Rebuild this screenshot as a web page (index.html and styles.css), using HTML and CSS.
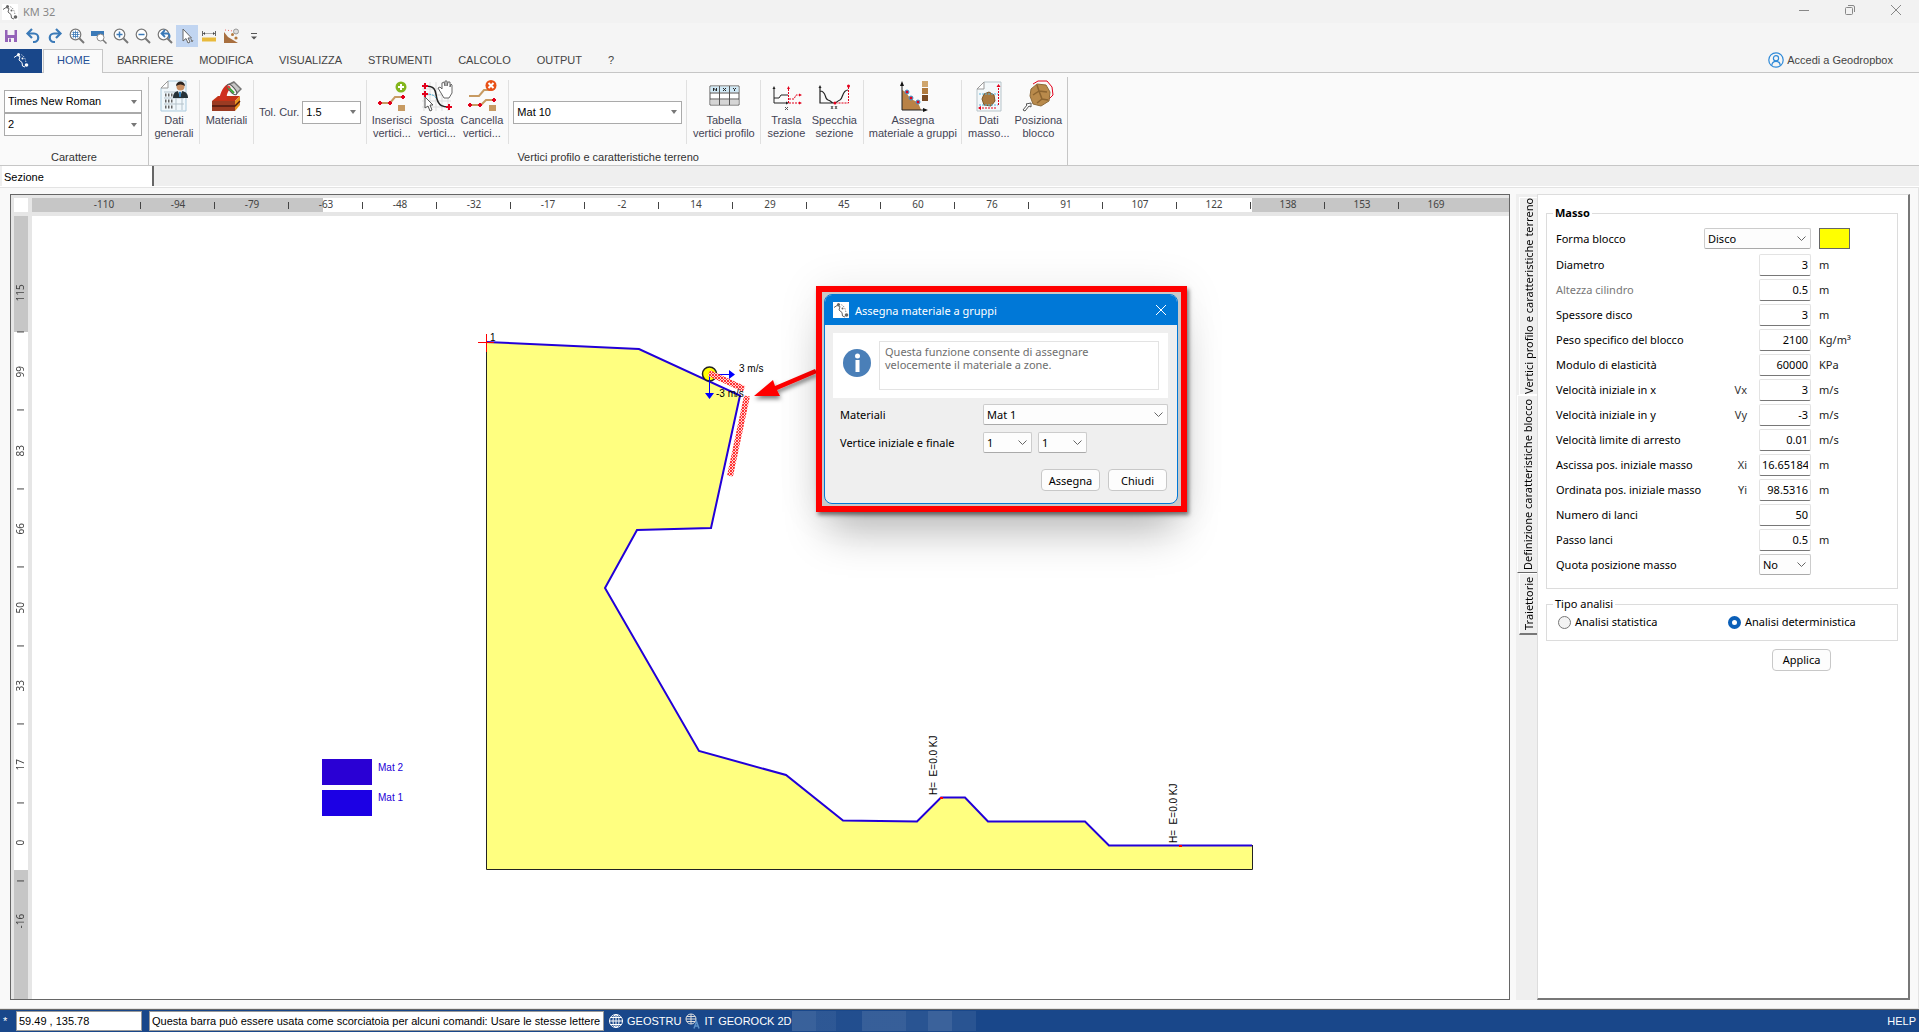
FILE: index.html
```html
<!DOCTYPE html>
<html lang="it">
<head>
<meta charset="utf-8">
<title>KM 32</title>
<link rel="stylesheet" href="styles.css">
</head>
<body>
<svg class="defs" aria-hidden="true">
  <defs>
    <symbol id="logo" viewBox="0 0 16 16">
      <path d="M1 5.500 4 3.500 7 4.500 6 8 9 10.500 9.500 14 12 15" fill="none" stroke="currentColor"/>
      <path d="M6 2.500C10 2 12.500 6 13 11" fill="none" stroke="currentColor" stroke-dasharray="1 1.500"/>
      <circle cx="5.500" cy="2.500" r="1.500" fill="currentColor"/>
      <circle cx="9.500" cy="6.500" r="1" fill="currentColor"/>
      <circle cx="13.500" cy="13" r="1.800" fill="currentColor"/>
    </symbol>
    <symbol id="lens" viewBox="0 0 16 16">
      <circle cx="6.500" cy="6.500" r="5.300" fill="#fff" stroke="#777" stroke-width="1.200"/>
      <path d="M10.500 10.500 15 15" stroke="#777" stroke-width="2"/>
    </symbol>
  </defs>
</svg>

<header class="titlebar">
  <svg class="titlebar-logo" viewBox="0 0 16 16"><use href="#logo"/></svg>
  <span class="titlebar-name">KM 32</span>
  <button class="window-button" aria-label="Riduci a icona"><svg viewBox="0 0 12 12"><path d="M1 6.500h10"/></svg></button>
  <button class="window-button" aria-label="Ripristina"><svg viewBox="0 0 12 12"><rect x="1.500" y="3.500" width="7" height="7" rx="1"/><path d="M4 1.500h5a1.500 1.500 0 0 1 1.500 1.500v5"/></svg></button>
  <button class="window-button" aria-label="Chiudi finestra"><svg viewBox="0 0 12 12"><path d="M1 1l10 10M11 1 1 11"/></svg></button>
</header>

<div class="quickbar" role="toolbar">
  <button class="quick" aria-label="Salva"><svg viewBox="0 0 16 16"><path d="M2 2h12v12H2z" fill="#9463b8"/><path d="M4.500 2h7v5h-7zM5 10h6v4H5z" fill="#f5f5f5"/><path d="M6 10.500h2V14H6z" fill="#9463b8"/></svg></button>
  <button class="quick" aria-label="Annulla"><svg viewBox="0 0 16 16"><path d="M3 5.500h6a4 4 0 0 1 0 8.500H8" fill="none" stroke="#3b7ab8" stroke-width="2.200"/><path d="M7 1 2.500 5.500 7 10" fill="none" stroke="#3b7ab8" stroke-width="2.200"/></svg></button>
  <button class="quick" aria-label="Ripeti"><svg viewBox="0 0 16 16"><path d="M13 5.500H7A4 4 0 0 0 7 14h1" fill="none" stroke="#3b7ab8" stroke-width="2.200"/><path d="M9 1l4.500 4.500L9 10" fill="none" stroke="#3b7ab8" stroke-width="2.200"/></svg></button>
  <button class="quick" aria-label="Zoom tutto"><svg viewBox="0 0 16 16"><use href="#lens"/><path d="M6.500 2.500v8M2.500 6.500h8M4.500 3.500v6M8.500 3.500v6" stroke="#3b7ab8" stroke-width=".8"/><path d="M3.500 4.500h6M3.500 8.500h6" stroke="#3b7ab8" stroke-width=".8"/></svg></button>
  <button class="quick" aria-label="Zoom finestra"><svg viewBox="0 0 16 16"><path d="M0 3h13v5H0z" fill="#3b7ab8"/><circle cx="9.500" cy="9.500" r="3.500" fill="#fff" stroke="#888"/><path d="m12 12 3.500 3.500" stroke="#777" stroke-width="1.500"/></svg></button>
  <button class="quick" aria-label="Zoom avanti"><svg viewBox="0 0 16 16"><use href="#lens"/><path d="M6.500 3.500v6M3.500 6.500h6" stroke="#3b7ab8" stroke-width="1.500"/></svg></button>
  <button class="quick" aria-label="Zoom indietro"><svg viewBox="0 0 16 16"><use href="#lens"/><path d="M3.500 6.500h6" stroke="#3b7ab8" stroke-width="1.500"/></svg></button>
  <button class="quick" aria-label="Zoom precedente"><svg viewBox="0 0 16 16"><use href="#lens"/><path d="M5 5.500h5c3 0 3 3 2 5M8 2 4.500 5.500 8 9" fill="none" stroke="#3b7ab8" stroke-width="1.800"/></svg></button>
  <button class="quick quick-on" aria-label="Seleziona"><svg viewBox="0 0 16 16"><path d="M4 1v12l3-2.500L9 15l2-1-2-4h3.500z" fill="#fff" stroke="#666"/><path d="M12 11l1 3 1-2" stroke="#777" fill="none"/></svg></button>
  <button class="quick" aria-label="Misura"><svg viewBox="0 0 16 16"><path d="M1 9.500h14v4H1z" fill="#e9ba3c"/><path d="M1.500 3v5M14.500 3v5" stroke="#666"/><path d="M2 5.500h12" stroke="#aaa"/><path d="m2 5.500 2-1.500v3zM14 5.500 12 4v3z" fill="#444"/></svg></button>
  <button class="quick" aria-label="Lancia masso"><svg viewBox="0 0 16 16"><path d="M1 4l4 5 5 3 5 3H1z" fill="#a86f3f"/><circle cx="13" cy="3.500" r="2.500" fill="#ddd" stroke="#999"/><circle cx="9.500" cy="6.500" r="1.500" fill="#b3793f"/><circle cx="13" cy="10" r="1.600" fill="#b3793f"/><path d="M2 2l8 1" stroke="#e66" stroke-dasharray="1 2"/></svg></button>
  <button class="quick quick-more" aria-label="Altri comandi"><svg viewBox="0 0 16 16"><path d="M5 5.500h6" stroke="#555"/><path d="M5 8.500h6l-3 3z" fill="#555"/></svg></button>
</div>

<nav class="tabs">
  <button class="file-tab" aria-label="File"><svg viewBox="0 0 16 16"><use href="#logo"/></svg></button>
  <a class="tab tab-on" href="#">HOME</a>
  <a class="tab" href="#">BARRIERE</a>
  <a class="tab" href="#">MODIFICA</a>
  <a class="tab" href="#">VISUALIZZA</a>
  <a class="tab" href="#">STRUMENTI</a>
  <a class="tab" href="#">CALCOLO</a>
  <a class="tab" href="#">OUTPUT</a>
  <a class="tab" href="#">?</a>
  <a class="account" href="#"><svg viewBox="0 0 16 16"><circle cx="8" cy="8" r="7.200"/><circle cx="8" cy="6.300" r="2.600"/><path d="M3.800 13.500C4 8 12 8 12.200 13.500"/></svg>Accedi a Geodropbox</a>
</nav>

<section class="ribbon">
  <div class="group">
    <div class="font-box">
      <select class="combo" aria-label="Carattere"><option>Times New Roman</option></select>
      <select class="combo" aria-label="Dimensione"><option>2</option></select>
    </div>
    <div class="group-name">Carattere</div>
  </div>
  <div class="group">
    <div class="tools">
      <div class="cell"><button class="tool"><svg viewBox="0 0 32 32">
        <path d="M10 1h18v30H3V8z" fill="#f1f8fc" stroke="#a9c9dc"/><path d="M10 1v7H3z" fill="#fff" stroke="#999"/>
        <path d="M6 12h20M6 18h20M6 24h20M18 12v18M24 18v12" stroke="#b5c3cb"/>
        <path d="M7 15h9M7 21h9M7 27h9" stroke="#666" stroke-width="3" stroke-dasharray="1.500 1.500"/>
        <path d="M15 18c0-6 3-7 7-7s8 1 8 7z" fill="#263238"/><path d="m20 11 2 6 2-6z" fill="#fff"/><path d="m21.500 12 .5 5 .5-5z" stroke="#2b7fc0"/><circle cx="22.500" cy="6.500" r="4" fill="#c98f63"/><path d="M18 6c0-6 9-6 9 0-3-2-6-2-9 0z" fill="#2b2320"/></svg>Dati<br>generali</button></div>
      <div class="cell"><button class="tool tool-mid"><svg viewBox="0 0 32 32">
        <path d="M1 21l6-5h22l-5 5z" fill="#c33318"/><path d="M1 21h23v10H1z" fill="#9b3b22"/><path d="m24 21 5-5v9l-5 6z" fill="#e8921f"/><path d="M1 26h23l5-5" stroke="#4b1a10" fill="none" stroke-width="1.500"/>
        <path d="M8 20c1-5 3-13 9-16l4 1-2 4c-3 3-4 7-3 11z" fill="#cf2f20"/>
        <path d="m17 4 6-3 8 8-6 6z" fill="#777"/><path d="m19 5 4-2 6 6-4 4z" fill="#c7c7c7"/><ellipse cx="21" cy="9.500" rx="2.500" ry="6.500" transform="rotate(-42 21 9.500)" fill="#f3f3f3" stroke="#555"/><path d="m17 7 6 6" stroke="#39a839" stroke-width="2"/><path d="m17 6 2 2" stroke="#e33" stroke-width="2"/></svg>Materiali</button></div>
      <div class="cell field-cell"><label for="tol">Tol. Cur.</label><select class="combo combo-small" id="tol"><option>1.5</option></select></div>
      <div class="cell vertex-cell">
        <button class="tool tool-vertex"><svg viewBox="0 0 32 32"><path d="M4 23h10l5-6h8" fill="none" stroke="#c79a62" stroke-width="2"/><path d="M4 21v4M2 23h4M14 21v4M12 23h4M27 15v4M25 17h4" stroke="#e3001b" stroke-width="2"/><circle cx="25" cy="7" r="5.500" fill="#83b61d"/><path d="M25 4v6M22 7h6" stroke="#fff" stroke-width="2"/><path d="M22 25h7v6h-7z" fill="#c79a62"/></svg>Inserisci<br>vertici...</button>
        <button class="tool tool-vertex"><svg viewBox="0 0 32 32"><path d="M3 4v27M9 2v29M15 2v29M21 2v29M27 2v29M1 9h29M1 15h29M1 21h29M1 27h29" stroke="#ddd"/><path d="M4 6c12 0 10 6 12 13s6 8 12 8" fill="none" stroke="#222" stroke-width="1.500"/><path d="M3 14c8 0 10 1 12 4" fill="none" stroke="#4bb0d8" stroke-dasharray="3 1"/><path d="M4 3v6M1 6h6M4 11v6M1 14h6M28 24v6M25 27h6" stroke="#e3001b" stroke-width="2"/><path d="M4 17v11l3-2 2 5 2-1-2-5h3z" fill="#fff" stroke="#555"/><path d="m17 8 2-1 2 2V3l2-1 1 4V1h2v5l1-4h2v5l1-3 1 1v8l-3 5h-5z" fill="#fff" stroke="#666"/></svg>Sposta<br>vertici...</button>
        <button class="tool tool-vertex"><svg viewBox="0 0 32 32"><path d="M3 16h10l5-6h6M4 25h11l5-5h9" fill="none" stroke="#c79a62" stroke-width="2"/><path d="M4 23v4M2 25h4M14 23v4M12 25h4M28 18v4M26 20h4" stroke="#e3001b" stroke-width="2"/><circle cx="25" cy="5.500" r="5.500" fill="#e85015"/><path d="m22.500 3 5 5m0-5-5 5" stroke="#fff" stroke-width="2"/><path d="M23 25h7v6h-7z" fill="#c79a62"/></svg>Cancella<br>vertici...</button>
      </div>
      <div class="cell mat-cell"><select class="combo combo-mat" aria-label="Materiale corrente"><option>Mat 10</option></select></div>
      <div class="cell"><button class="tool tool-table"><svg viewBox="0 0 32 32"><path d="M2 6h29v19H2z" fill="#fff" stroke="#555"/><path d="M2.500 6.500h28v6h-28z" fill="#cfe8f5"/><path d="M2.500 19.500h28v5h-28z" fill="#d5d5d5"/><path d="M2 13h29M2 19h29M11.500 6v19M21.500 6v19" stroke="#555"/><path d="M5.500 11V8l3 3V8M15 8l3 3m0-3-3 3M25 8l1.500 1.500L28 8m-1.500 1.500V11" fill="none" stroke="#222"/></svg>Tabella<br>vertici profilo</button></div>
      <div class="cell pair-cell">
        <button class="tool"><svg viewBox="0 0 32 32"><path d="M4 8v15h13" fill="none" stroke="#222"/><path d="M2.500 9 4 6l1.500 3zM16 21.500l3 1.500-3 1.500z" fill="#222"/><path d="M4 18h5l2-3h7" fill="none" stroke="#222"/><path d="M18.500 23V8M19 23h11M19 19h5l2-4h4" fill="none" stroke="#e3001b" stroke-dasharray="2 1"/><path d="m17 9 1.500-3L20 9zM29 21.500l3 1.500-3 1.500zM29 13.500l3 1.500-3 1.500z" fill="#e3001b"/><path d="m15 27 3 3m0-3-3 3" stroke="#555"/></svg>Trasla<br>sezione</button>
        <button class="tool tool-end"><svg viewBox="0 0 32 32"><path d="M2 7v16h14M2 11c7 0 4 8 8 9s3 3 6 3 3-2 6-3 2-10 8-10" fill="none" stroke="#222" stroke-width="1.200"/><path d="M30.500 7v16H19" fill="none" stroke="#e3001b" stroke-dasharray="2 1"/><path d="m.5 8 1.500-3 1.500 3z" fill="#222"/><circle cx="30.500" cy="6" r="1.500" fill="#e3001b"/><circle cx="17" cy="23" r="1.500" fill="#e3001b"/><path d="m13 26 2 3m0-3-2 3m4-3 2 3m0-3-2 3" stroke="#555"/></svg>Specchia<br>sezione</button>
      </div>
      <div class="cell"><button class="tool tool-wide"><svg viewBox="0 0 32 32"><path d="M5 10c6 2 6 8 11 10s6 4 8 10H5z" fill="#b98246"/><path d="M5 4v26h23" fill="none" stroke="#222"/><path d="M3 6 5 1l2 5zM26 28l5 2-5 2z" fill="#111"/><g fill="#e3001b" stroke="#3aa0d8"><circle cx="10" cy="12" r="2"/><circle cx="14" cy="18" r="2"/><circle cx="21" cy="22" r="2"/></g><path d="M25 1h6v6h-6z" fill="#cfa56c"/><path d="M25 8h6v6h-6z" fill="#b07a3e"/><path d="M25 15h6v6h-6z" fill="#7a4a22"/></svg>Assegna<br>materiale a gruppi</button></div>
      <div class="cell pair-cell">
        <button class="tool tool-mid"><svg viewBox="0 0 32 32"><path d="M11 2h17v29H4V9z" fill="#f3f8fa" stroke="#b7c4ca"/><path d="M11 2v7H4z" fill="#fff" stroke="#999"/><path d="m11 14 5-2 5 3 1 6-4 5-7-1-2-6z" fill="#a9793f" stroke="#7a5527"/><path d="M6 14h19M6 25h19" stroke="#5ab4dc" stroke-dasharray="2 1"/><path d="M25.500 5v20M6 28h17" stroke="#e3001b" stroke-dasharray="2 1"/><path d="m23.500 7 2-3 2 3zM8 26l-3 2 3 2z" fill="#e3001b"/></svg>Dati<br>masso...</button>
        <button class="tool tool-end"><svg viewBox="0 0 32 32"><path d="M11 4l5-3h9l5 6 1 8-5 5" fill="none" stroke="#e3001b"/><path d="m9 9 6-5 9 1 4 7-1 9-8 5-8-2-3-8z" fill="#b98a4b" stroke="#8c6a3a"/><path d="m15 5 2 6 8 1m-8-1-6 4m6-4 3 8 6 1m-6-1-5 4" fill="none" stroke="#8c6430" stroke-width="1.500"/><path d="m9 23-5 1 1 1-4 5 2 1 4-5 2 1z" fill="#fff" stroke="#555"/></svg>Posiziona<br>blocco</button>
      </div>
    </div>
    <div class="group-name">Vertici profilo e caratteristiche terreno</div>
  </div>
</section>

<div class="doc-tabs"><button class="doc-tab">Sezione</button></div>

<main class="workspace">
  <section class="view">
    <div class="corner"></div>
    <div class="ruler ruler-h">
      <span>-110</span><span>-94</span><span>-79</span><span>-63</span><span>-48</span><span>-32</span><span>-17</span><span>-2</span><span>14</span><span>29</span><span>45</span><span>60</span><span>76</span><span>91</span><span>107</span><span>122</span><span>138</span><span>153</span><span>169</span>
    </div>
    <div class="ruler ruler-v">
      <span>115</span><span>99</span><span>83</span><span>66</span><span>50</span><span>33</span><span>17</span><span>0</span><span>-16</span>
    </div>
    <div class="canvas">
      <svg class="drawing" role="img" aria-label="Profilo del pendio">
        <defs>
          <pattern id="hatch" width="3" height="3" patternUnits="userSpaceOnUse"><rect width="3" height="3" fill="#ffd0d0"/><path d="M0 0l3 3M3 0 0 3" stroke="#f22" stroke-width=".9"/></pattern>
          <filter id="soft" x="-30%" y="-30%" width="160%" height="170%"><feDropShadow dx="1" dy="3" stdDeviation="2" flood-opacity=".5"/></filter>
        </defs>
        <path d="M454 126 607 133 708 179.500 679 312 605 314 573 372 667 535 754 559 811 604.500 885 605.500 909 581.500H933L956 605.500H1053L1077 629.500H1220V653.500H454z" fill="#ffff80"/>
        <path d="M454.500 126V653.500H1220.500V629" fill="none" stroke="#222"/>
        <path d="M454 126 607 133 708 179.500 679 312 605 314 573 372 667 535 754 559 811 604.500 885 605.500 909 581.500H933L956 605.500H1053L1077 629.500H1220" fill="none" stroke="#2200d8" stroke-width="2"/>
        <path d="M446 126.500h16M454.500 118v18" stroke="#f00"/>
        <text x="458" y="125">1</text>
        <circle cx="677.500" cy="158" r="7" fill="#ff0" stroke="#222" stroke-width="1.500"/>
        <path d="M678 158.500h20M677.500 159v20" stroke="#00f"/>
        <path d="m697 154 6 4.500-6 4.500zM673 177h9l-4.500 6z" fill="#00f"/>
        <path d="m677 157 35 16M715 180l-17 80" stroke="url(#hatch)" stroke-width="6"/>
        <text x="707" y="156">3 m/s</text><text x="684" y="181">-3 m/s</text>
        <path d="m722 180 19-16 2 6 40-17 2 4-40 17 3 6z" fill="#f00" filter="url(#soft)"/>
        <path d="M290 543h50v26h-50z" fill="#2a00d4"/><path d="M290 574h50v26h-50z" fill="#1c00e4"/>
        <text class="legend" x="346" y="555">Mat 2</text><text class="legend" x="346" y="585">Mat 1</text>
        <text transform="translate(905 579) rotate(-90)">H=&#160; E=0.0 KJ</text>
        <text transform="translate(1145 627) rotate(-90)">H=&#160; E=0.0 KJ</text>
        <path d="M908 581h3v2h-3zM1147 629h3v2h-3z" fill="#f00"/>
      </svg>
      <div class="callout">
        <form class="dialog" aria-label="Assegna materiale a gruppi">
          <header class="dialog-title"><svg viewBox="0 0 16 16"><use href="#logo"/></svg><span>Assegna materiale a gruppi</span>
            <button type="button" class="dialog-close" aria-label="Chiudi"><svg viewBox="0 0 12 12"><path d="M1 1l10 10M11 1 1 11"/></svg></button></header>
          <div class="dialog-info">
            <svg viewBox="0 0 28 28"><circle cx="14" cy="14" r="14" fill="#4a7fb8"/><circle cx="14.500" cy="7" r="2.500" fill="#fff"/><path d="M12.500 11h4v12h-4z" fill="#fff"/></svg>
            <p>Questa funzione consente di assegnare velocemente il materiale a zone.</p>
          </div>
          <div class="dialog-row"><label for="mat">Materiali</label><select class="drop drop-mat" id="mat"><option>Mat 1</option></select></div>
          <div class="dialog-row"><label for="v1">Vertice iniziale e finale</label><select class="drop drop-vertex" id="v1"><option>1</option></select><select class="drop drop-vertex" aria-label="Vertice finale"><option>1</option></select></div>
          <div class="dialog-actions"><button type="button" class="push">Assegna</button><button type="button" class="push">Chiudi</button></div>
        </form>
      </div>
    </div>
  </section>

  <aside class="side">
    <div class="side-tabs">
      <button class="side-tab side-tab-1">Vertici profilo e caratteristiche terreno</button>
      <button class="side-tab side-tab-2">Definizione caratteristiche blocco</button>
      <button class="side-tab side-tab-3">Traiettorie</button>
    </div>
    <form class="side-page">
      <fieldset class="box box-mass">
        <legend class="bold">Masso</legend>
        <div class="row row-first"><label for="f0">Forma blocco</label><select class="drop drop-shape" id="f0"><option>Disco</option></select><span><button type="button" class="swatch" aria-label="Colore blocco"></button></span></div>
        <div class="row"><label for="f1">Diametro</label><input id="f1" value="3"><span>m</span></div>
        <div class="row"><label class="dim" for="f2">Altezza cilindro</label><input id="f2" value="0.5"><span>m</span></div>
        <div class="row"><label for="f3">Spessore disco</label><input id="f3" value="3"><span>m</span></div>
        <div class="row"><label for="f4">Peso specifico del blocco</label><input id="f4" value="2100"><span>Kg/m³</span></div>
        <div class="row"><label for="f5">Modulo di elasticità</label><input id="f5" value="60000"><span>KPa</span></div>
        <div class="row"><label for="f6">Velocità iniziale in x</label><i>Vx</i><input id="f6" value="3"><span>m/s</span></div>
        <div class="row"><label for="f7">Velocità iniziale in y</label><i>Vy</i><input id="f7" value="-3"><span>m/s</span></div>
        <div class="row"><label for="f8">Velocità limite di arresto</label><input id="f8" value="0.01"><span>m/s</span></div>
        <div class="row"><label for="f9">Ascissa pos. iniziale masso</label><i>Xi</i><input id="f9" value="16.65184"><span>m</span></div>
        <div class="row"><label for="f10">Ordinata pos. iniziale masso</label><i>Yi</i><input id="f10" value="98.5316"><span>m</span></div>
        <div class="row"><label for="f11">Numero di lanci</label><input id="f11" value="50"><span></span></div>
        <div class="row"><label for="f12">Passo lanci</label><input id="f12" value="0.5"><span>m</span></div>
        <div class="row"><label for="f13">Quota posizione masso</label><select class="drop drop-yes" id="f13"><option>No</option></select><span></span></div>
      </fieldset>
      <fieldset class="box box-type">
        <legend>Tipo analisi</legend>
        <div class="choices">
          <label><input type="radio" name="type">Analisi statistica</label>
          <label><input type="radio" name="type" checked>Analisi deterministica</label>
        </div>
      </fieldset>
      <button type="button" class="push push-apply">Applica</button>
    </form>
  </aside>
</main>

<footer class="status">
  <span class="star">*</span>
  <input class="coords" aria-label="Coordinate" value="59.49 , 135.78">
  <input class="command" aria-label="Comando" value="Questa barra può essere usata come scorciatoia per alcuni comandi: Usare le stesse lettere dei menu">
  <a class="status-link" href="#"><svg viewBox="0 0 16 16" fill="none" stroke="#fff"><circle cx="8" cy="8" r="6.500"/><ellipse cx="8" cy="8" rx="3" ry="6.500"/><path d="M8 1v14M1 8h14M2.500 4.500h11M2.500 11.500h11"/></svg>GEOSTRU</a>
  <a class="status-link" href="#"><svg viewBox="0 0 16 16" fill="none" stroke="#ddd"><circle cx="6" cy="6" r="5"/><path d="M6 1v10M1 6h10M2 3.500h8M2 8.500h8"/><path d="m9 15.500 2.500-7 2.500 7m-4-2.500h3" stroke="#5d92c8" stroke-width="1.500"/></svg>IT</a>
  <span>GEOROCK 2D</span>
  <span class="mosaic"></span>
  <a class="help" href="#">HELP</a>
</footer>
</body>
</html>
```
FILE: styles.css
```css
* { box-sizing: border-box; }

body {
  margin: 0;
  min-height: 100vh;
  display: flex;
  flex-direction: column;
  background: #f9f9f9;
  color: #000;
  font: 11px/13px "Liberation Sans", Arial, sans-serif;
}

button, input, select { font: inherit; color: inherit; margin: 0; }
button { padding: 0; border: 0; background: none; }
a { color: inherit; text-decoration: none; }
i { font-style: normal; }
.defs { display: none; }

/* window title */
.titlebar { display: flex; align-items: center; height: 23px; padding-left: 2px; background: #f2f2f2; color: #888; }
.titlebar-logo { width: 16px; height: 16px; background: #fff; color: #666; }
.titlebar-name { flex: 1; padding-left: 5px; font: 11px/16px "Noto Sans", sans-serif; }
.window-button { width: 46px; height: 20px; }
.window-button svg { width: 12px; height: 12px; fill: none; stroke: #888; }

/* quick access */
.quickbar { display: flex; height: 26px; align-items: center; background: #f5f5f5; }
.quick { width: 22px; height: 22px; display: grid; place-items: center; }
.quick svg { width: 16px; height: 16px; }
.quick-on { background: #c1d5f1; }
.quick-more { margin-left: 1px; }

/* ribbon tabs */
.tabs { display: flex; height: 24px; background: #f5f5f5; border-bottom: 1px solid #c6c6c6; color: #444; }
.file-tab { width: 42px; height: 24px; background: #19478a; color: #fff; }
.file-tab svg { width: 16px; height: 16px; }
.tab { padding: 4px 13px; line-height: 14px; }
.tab-on { height: 24px; margin: 0 1px; padding: 3px 12px 3px 13px; background: #fafafa; border: 1px solid #c6c6c6; border-bottom: 0; color: #1f4f96; }
.account { display: flex; align-items: center; gap: 3px; margin: 0 26px 1px auto; }
.account svg { width: 16px; height: 16px; fill: none; stroke: #2f8ad8; stroke-width: 1.2; }

/* ribbon */
.ribbon { display: flex; height: 93px; background: #fafafa; border-bottom: 1px solid #c6c6c6; padding-top: 4px; }
.group { display: flex; flex-direction: column; justify-content: space-between; border-right: 1px solid #c6c6c6; }
.group-name { text-align: center; line-height: 14px; color: #333; padding-bottom: 1px; }
.font-box { display: flex; flex-direction: column; padding: 13px 6px 0 4px; }
.combo {
  appearance: none;
  width: 138px;
  height: 23px;
  padding: 0 3px;
  border: 1px solid #aaa;
  border-radius: 0;
  color: #000;
  background: #fff url("data:image/svg+xml,%3Csvg xmlns='http://www.w3.org/2000/svg' width='6' height='4'%3E%3Cpath d='M0 0h6L3 4z' fill='%23777'/%3E%3C/svg%3E") no-repeat right 4px center;
}
.combo-small { width: 59px; }
.combo-mat { width: 169px; }
.tools { display: flex; padding-top: 3px; }
.cell { position: relative; display: flex; height: 64px; }
.cell:not(:last-child) { border-right: 1px solid #e0e0e0; }
.tool { width: 50px; display: flex; flex-direction: column; align-items: center; justify-content: flex-start; white-space: nowrap; color: #445; }
.tool svg { width: 32px; height: 32px; margin-bottom: 2px; flex: none; }
.tool-mid { width: 53px; }
.tool-vertex { width: 45px; }
.tool-table { width: 73px; }
.tool-end { width: 46px; }
.tool-wide { width: 97px; }
.field-cell { align-items: center; gap: 3px; padding: 0 5px; color: #445; }
.vertex-cell { padding: 0 4px 0 2px; }
.mat-cell { align-items: center; padding: 0 4px; }
.pair-cell { padding-right: 6px; }

/* document tabs */
.doc-tabs { display: flex; height: 21px; padding-left: 2px; background: #efefef; border-bottom: 1px solid #fff; }
.doc-tab { width: 152px; height: 20px; padding: 2px 2px 0; text-align: left; background: #fff; border-right: 2px solid #666; }

/* workspace */
.workspace { flex: 1; display: flex; gap: 6px; padding: 6px 8px 8px 10px; border: solid #e3e3e3; border-width: 1px 1px 1px 0; }
.view {
  flex: 1;
  min-width: 0;
  display: grid;
  grid-template: 14px minmax(0, 1fr) / 14px minmax(0, 1fr);
  gap: 4px;
  padding: 3px 0 0 3px;
  border: 1px solid #666;
  background: #e6e6e6;
}
.corner { background: #fff; }
.ruler { display: flex; overflow: hidden; font: 10px/13px "Noto Sans", sans-serif; color: #444; }
.ruler span { position: relative; text-align: center; }
.ruler span:not(:last-child)::after { content: ""; position: absolute; background: #444; }
.ruler-h { padding-left: 35px; background: linear-gradient(90deg, #c6c6c6 291px, #fff 291px 1220px, #c6c6c6 1220px); }
.ruler-h span { flex: 0 0 74px; }
.ruler-h span::after { right: 0; top: 4px; width: 1px; height: 7px; }
.ruler-v { flex-direction: column; padding: 38px 0 39px; background: linear-gradient(#c6c6c6 116px, #fff 116px 654px, #c6c6c6 654px); }
.ruler-v span { flex: 1; writing-mode: vertical-rl; transform: rotate(180deg); }
.ruler-v span::after { top: 0; left: 4px; width: 7px; height: 1px; }
.canvas { position: relative; background: #fff; overflow: hidden; }
.drawing { display: block; width: 100%; height: 100%; font-size: 10px; }
.legend { fill: #2200d8; }

/* dialog over the drawing */
.callout {
  position: absolute;
  left: 784px;
  top: 70px;
  width: 371px;
  padding: 2px 3px 2px 2px;
  border: 6px solid #f00;
  background: #c9c9c9;
  box-shadow: 2px 3px 4px rgba(0, 0, 0, .5), 0 32px 40px -12px rgba(0, 0, 0, .25), 0 0 40px rgba(0, 0, 0, .08);
}
.dialog { height: 210px; border: 1px solid #0078d7; border-radius: 8px; overflow: hidden; background: #efefef; font: 11px/13px "Noto Sans", sans-serif; }
.dialog-title { display: flex; align-items: center; height: 30px; padding: 0 8px; background: #0078d7; color: #fff; }
.dialog-title span { flex: 1; padding-left: 6px; }
.dialog-title svg { width: 16px; height: 16px; background: #fff; color: #666; }
.dialog-title .dialog-close svg { width: 12px; height: 12px; display: block; background: none; fill: none; stroke: #fff; }
.dialog-close { padding: 2px; }
.dialog-info { display: flex; gap: 8px; margin: 8px 9px 6px 8px; padding: 8px 9px 8px 10px; background: #fff; }
.dialog-info svg { width: 28px; height: 28px; margin-top: 8px; flex: none; }
.dialog-info p { flex: 1; height: 49px; margin: 0; padding: 3px 40px 0 5px; border: 1px solid #e3e3e3; color: #6e6e6e; }
.dialog-row { display: flex; gap: 6px; margin-bottom: 7px; padding: 0 9px 0 15px; align-items: center; }
.dialog-row label { width: 137px; white-space: nowrap; }
.dialog-actions { display: flex; justify-content: flex-end; gap: 8px; padding: 9px 10px 0; }
.drop {
  appearance: none;
  height: 21px;
  padding: 0 3px;
  border: 1px solid #ccc;
  border-bottom-color: #aaa;
  border-radius: 2px;
  background: #fdfdfd url("data:image/svg+xml,%3Csvg xmlns='http://www.w3.org/2000/svg' width='9' height='5'%3E%3Cpath d='M.5.5l4 4 4-4' fill='none' stroke='%23666'/%3E%3C/svg%3E") no-repeat right 4px center;
}
.drop-mat { flex: 1; }
.drop-vertex { width: 49px; }
.push { width: 59px; height: 22px; border: 1px solid #c8c8c8; border-radius: 4px; background: #fdfdfd; }

/* side panel */
.side { width: 394px; display: flex; background: #efefef; font: 11px/14px "Noto Sans", sans-serif; }
.side-tabs { width: 21px; display: flex; flex-direction: column; align-items: flex-end; padding-top: 3px; }
.side-tab { width: 18px; writing-mode: vertical-rl; transform: rotate(180deg); text-align: center; white-space: nowrap; border: 1px solid #fff; border-left-width: 0; background: #efefef; }
.side-tab-1 { height: 198px; }
.side-tab-2 { height: 178px; width: 20px; border-top-color: #666; }
.side-tab-3 { height: 62px; border-top: 2px solid #777; }
.side-page { flex: 1; padding: 11px 10px 0 8px; background: #fff; border: 1px solid #ddd; border-right: 2px solid #777; border-bottom: 2px solid #777; }
.box { margin: 0; min-width: 0; border: 1px solid #dcdcdc; }
.box legend { margin-left: -3px; padding: 0 2px; }
.bold { font-weight: bold; }
.box-mass { padding: 6px 0 11px 9px; }
.box-type { margin-top: 8px; padding: 0 9px 7px; }
.row { display: flex; align-items: center; height: 25px; gap: 8px; }
.row-first { margin-bottom: 1px; }
.row label { flex: 1; }
.row i { padding-right: 4px; color: #333; }
.row input { width: 52px; height: 22px; padding: 0 2px; text-align: right; border: 1px solid #e3e3e3; border-bottom-color: #777; border-radius: 2px; background: #fff; }
.row span { width: 78px; display: flex; color: #222; }
.row .dim { color: #777; }
.drop-shape { width: 107px; }
.drop-yes { width: 52px; }
.swatch { width: 31px; height: 21px; border: 1px solid #666; background: #ff0; }
.choices { display: grid; grid-template-columns: 170px 1fr; height: 22px; align-items: center; }
.choices label { display: flex; align-items: center; gap: 4px; white-space: nowrap; }
.choices input { appearance: none; width: 13px; height: 13px; margin: 0 0 0 2px; border: 1px solid #777; border-radius: 50%; background: #f3f3f3; }
.choices input:checked { border: 4px solid #0a5fb8; background: #fff; }
.push-apply { display: block; margin: 8px 67px 0 auto; }

/* status bar */
.status { display: flex; align-items: center; height: 23px; border-top: 1px solid #666; background: #19478a; color: #fff; }
.star { width: 16px; padding-left: 3px; }
.status input { height: 20px; padding: 0 2px; border: 1px solid #999; border-radius: 0; background: #fff; color: #000; }
.coords { width: 126px; }
.command { width: 455px; margin: 0 4px 0 7px; }
.status-link { display: flex; align-items: center; gap: 3px; padding-right: 4px; }
.status-link svg { width: 16px; height: 16px; }
.mosaic { width: 184px; height: 20px; background: linear-gradient(90deg, rgba(255, 255, 255, .14) 24px, rgba(255, 255, 255, .09) 24px 44px, rgba(255, 255, 255, .04) 44px 70px, rgba(255, 255, 255, .13) 70px 114px, rgba(255, 255, 255, .07) 114px 136px, rgba(255, 255, 255, .15) 136px 160px, rgba(255, 255, 255, .07) 160px); }
.help { margin-left: auto; padding-right: 3px; }
```
